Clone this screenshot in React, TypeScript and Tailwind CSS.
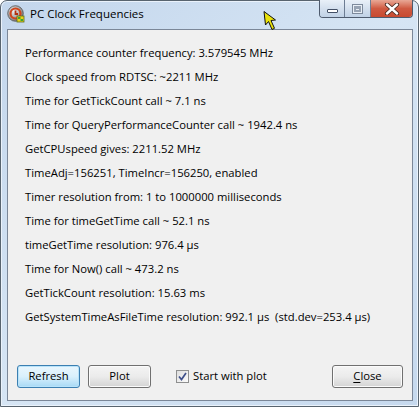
import React from "react";

const lines = [
  "Performance counter frequency: 3.579545 MHz",
  "Clock speed from RDTSC: ~2211 MHz",
  "Time for GetTickCount call ~ 7.1 ns",
  "Time for QueryPerformanceCounter call ~ 1942.4 ns",
  "GetCPUspeed gives: 2211.52 MHz",
  "TimeAdj=156251, TimeIncr=156250, enabled",
  "Timer resolution from: 1 to 1000000 milliseconds",
  "Time for timeGetTime call ~ 52.1 ns",
  "timeGetTime resolution: 976.4 µs",
  "Time for Now() call ~ 473.2 ns",
  "GetTickCount resolution: 15.63 ms",
  "GetSystemTimeAsFileTime resolution: 992.1 µs\u00a0\u00a0(std.dev=253.4 µs)",
];

function AppIcon() {
  return (
    <svg width="18" height="18" viewBox="0 0 18 18">
      <defs>
        <radialGradient id="rg" cx="0.4" cy="0.35" r="0.7">
          <stop offset="0" stopColor="#f4f4f4" />
          <stop offset="1" stopColor="#6d6d6d" />
        </radialGradient>
      </defs>
      <circle cx="8.5" cy="8.5" r="7.8" fill="url(#rg)" stroke="#555" strokeWidth="0.8" />
      <circle cx="8.5" cy="8.5" r="5" fill="none" stroke="#d0451b" strokeWidth="2.2" />
      <path d="M8.5 5.5 L8.5 9 L11 9" stroke="#b33010" strokeWidth="1.8" fill="none" />
      <rect x="10" y="11" width="7" height="6" fill="#e8d21a" stroke="#5a6b1d" strokeWidth="0.8" />
      <rect x="11" y="12" width="2.5" height="2" fill="#3aa33a" />
      <rect x="13.5" y="14" width="2.5" height="2" fill="#3aa33a" />
    </svg>
  );
}

function CaptionButtons() {
  return (
    <div className="flex h-[18px] -mt-[1px] border border-t-0 border-[#4e5b6e] rounded-b-[4px] overflow-hidden">
      <div className="w-[25px] h-full bg-gradient-to-b from-[#e9f0f8] via-[#d4e0ee] to-[#c1d2e6] flex items-end justify-center pb-[4px] border-r border-[#6d7d93]">
        <div className="w-[11px] h-[4px] bg-white border border-[#435066] rounded-[1px]" />
      </div>
      <div className="w-[26px] h-full bg-gradient-to-b from-[#e9f0f8] via-[#d4e0ee] to-[#c1d2e6] flex items-center justify-center border-r border-[#6d7d93]">
        <div className="w-[11px] h-[10px] border border-[#7d8a9c] bg-[#e8eef5] flex items-center justify-center">
          <div className="w-[7px] h-[6px] border-2 border-[#97a3b3] border-t-[3px]" />
        </div>
      </div>
      <div className="w-[41px] h-full bg-gradient-to-b from-[#e8a896] via-[#cf5a42] to-[#c84a30] flex items-center justify-center">
        <svg width="16" height="12" viewBox="0 0 16 12">
          <path d="M3 1.5 L13 10.5 M13 1.5 L3 10.5" stroke="#4a2a22" strokeWidth="4.2" strokeLinecap="round" />
          <path d="M3 1.5 L13 10.5 M13 1.5 L3 10.5" stroke="#ffffff" strokeWidth="2.4" strokeLinecap="round" />
        </svg>
      </div>
    </div>
  );
}

function Cursor() {
  return (
    <svg className="absolute left-[262px] top-[10px]" width="18" height="22" viewBox="0 0 18 22">
      <path
        d="M2 1.5 L3.5 15 L6.5 11.5 L10 19.5 L12.5 18.3 L9 10.5 L13.5 10 Z"
        fill="#e9e20a"
        stroke="#111"
        strokeWidth="1"
        strokeLinejoin="round"
      />
    </svg>
  );
}

function Btn({ children, focused, w }: { children: React.ReactNode; focused?: boolean; w: string }) {
  return (
    <div
      className={
        "h-[23px] rounded-[3px] border flex items-center justify-center text-[11.25px] text-black " +
        w +
        " " +
        (focused
          ? "border-[#3c7fb1] bg-gradient-to-b from-[#eaf6fd] via-[#d9f0fc] to-[#a7d9f5] shadow-[inset_0_0_0_1px_#b8e3fa]"
          : "border-[#707070] bg-gradient-to-b from-[#f4f4f4] via-[#ebebeb] to-[#d4d4d4] shadow-[inset_0_0_0_1px_#fbfbfb]")
      }
    >
      {children}
    </div>
  );
}

export default function App() {
  return (
    <div
      className="w-[419px] h-[407px] relative bg-white"
      style={{ fontFamily: '"Open Sans", "Liberation Sans", sans-serif' }}
    >
      <div className="w-full h-full flex flex-col border border-[#58646f] rounded-t-[7px] bg-gradient-to-br from-[#c3d6ec] via-[#d6e5f4] to-[#c6d9ee] shadow-[inset_0_0_0_1px_#eaf2fb]">
        <div className="h-[28px] flex items-start pr-[5px]">
          <div className="ml-[6px] mt-[4px]">
            <AppIcon />
          </div>
          <div className="ml-[5px] mt-[5px] text-[11.5px] leading-[16px] text-black">PC Clock Frequencies</div>
          <div className="flex-1" />
          <CaptionButtons />
        </div>
        <div className="flex-1 ml-[6px] mr-[5px] mb-[5px] border border-[#7b8798] bg-[#f0f0f0] flex flex-col">
          <div className="pl-[17px] pt-[11px] flex flex-col">
            {lines.map((l, i) => (
              <div key={i} className="h-[24px] leading-[24px] text-[11.25px] text-black whitespace-pre">
                {l}
              </div>
            ))}
          </div>
          <div className="mt-auto pb-[12px] pl-[9px] pr-[9px] flex items-center">
            <Btn focused w="w-[63px]">Refresh</Btn>
            <div className="ml-[8px]">
              <Btn w="w-[63px]">Plot</Btn>
            </div>
            <div className="ml-[25px] flex items-center">
              <div className="w-[13px] h-[13px] border border-[#8e8f8f] bg-gradient-to-br from-[#dedede] to-[#fbfbfb] flex items-center justify-center">
                <svg width="9" height="9" viewBox="0 0 9 9">
                  <path d="M1 4.5 L3.5 7.5 L8 1" stroke="#3e4f8a" strokeWidth="1.7" fill="none" />
                </svg>
              </div>
              <span className="ml-[4px] text-[11.25px] text-black">Start with plot</span>
            </div>
            <div className="flex-1" />
            <Btn w="w-[71px]">
              <span>
                <span className="underline underline-offset-2">C</span>lose
              </span>
            </Btn>
          </div>
        </div>
      </div>
      <Cursor />
    </div>
  );
}
